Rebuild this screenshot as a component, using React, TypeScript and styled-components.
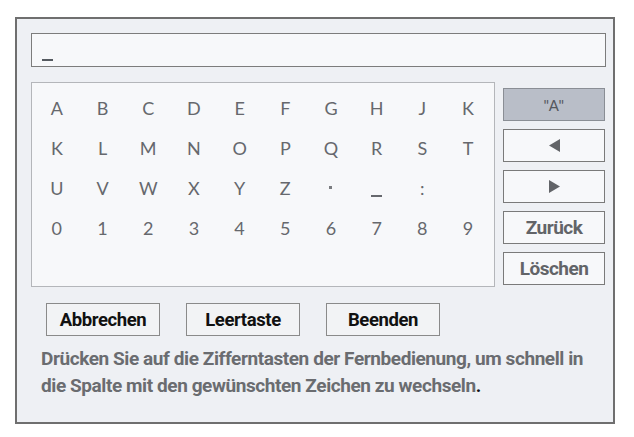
import React from "react";
import styled, { createGlobalStyle } from "styled-components";

const Global = createGlobalStyle`
  html, body { margin: 0; padding: 0; background: #ffffff; }
  body { font-family: "Liberation Sans", Arial, sans-serif; }
`;

const Page = styled.div`
  padding: 17px 0 0 15px;
`;

const Frame = styled.div`
  box-sizing: border-box;
  width: 600px;
  height: 407px;
  border: 2px solid #6f6f6f;
  background: #eef0f4;
  padding: 14px 0 0 14px;
  display: flex;
  flex-direction: column;
`;

const InputBox = styled.div`
  box-sizing: border-box;
  width: 575px;
  height: 34px;
  border: 1px solid #7c7c7c;
  background: #f7f8fa;
  padding: 0 0 0 10px;
  display: flex;
  align-items: flex-end;
`;

const Cursor = styled.div`
  width: 11px;
  height: 2px;
  background: #555a60;
  margin-bottom: 5px;
`;

const Middle = styled.div`
  display: flex;
  gap: 8px;
  margin-top: 15px;
`;

const Panel = styled.div`
  box-sizing: border-box;
  width: 464px;
  height: 205px;
  border: 1px solid #b4b6ba;
  background: #f7f8fa;
  padding: 5px 0 0 2px;
  display: grid;
  grid-template-columns: repeat(10, 45.7px);
  grid-auto-rows: 40px;
  align-content: start;
`;

const Key = styled.div`
  display: flex;
  align-items: center;
  justify-content: center;
  font-family: Lato, "Noto Sans", sans-serif;
  font-size: 18px;
  color: #66686d;
`;

const Underscore = styled.div`
  width: 11px;
  height: 2px;
  background: #66686d;
  margin-top: 16px;
`;

const SmallDot = styled.div`
  width: 3px;
  height: 3px;
  background: #7a7c80;
  margin-top: -2px;
`;

const SideColumn = styled.div`
  display: flex;
  flex-direction: column;
  gap: 8px;
  padding-top: 6px;
`;

const SideButton = styled.div<{ $active?: boolean }>`
  box-sizing: border-box;
  width: 102px;
  height: 33px;
  border: 1px solid ${(p) => (p.$active ? "#8a8e95" : "#7a7a7a")};
  background: ${(p) => (p.$active ? "#b9bec8" : "#f7f8fa")};
  display: flex;
  align-items: center;
  justify-content: center;
  font-family: Roboto, "Liberation Sans", sans-serif;
  font-weight: 700;
  font-size: 19px;
  letter-spacing: -0.5px;
  color: #626468;
`;

const ModeLabel = styled.span`
  font-family: Lato, "Noto Sans", sans-serif;
  font-weight: 400;
  font-size: 15px;
  letter-spacing: 0.5px;
  color: #55585e;
`;

const ActionRow = styled.div`
  display: flex;
  gap: 26px;
  margin: 16px 0 0 15px;
`;

const ActionButton = styled.div`
  box-sizing: border-box;
  width: 114px;
  height: 33px;
  border: 1px solid #8a8a8a;
  background: #f2f3f5;
  display: flex;
  align-items: center;
  justify-content: center;
  font-family: Roboto, "Liberation Sans", sans-serif;
  font-weight: 700;
  font-size: 18.5px;
  letter-spacing: -0.4px;
  color: #111111;
`;

const Help = styled.p`
  margin: 9px 0 0 10px;
  font-family: Roboto, "Liberation Sans", sans-serif;
  font-weight: 700;
  font-size: 19px;
  letter-spacing: -0.42px;
  line-height: 27px;
  color: #6a6c70;
  white-space: nowrap;
`;

const Dot = styled.span`
  color: #111111;
`;

const Arrow = ({ dir }: { dir: "left" | "right" }) => (
  <svg width="11" height="13" viewBox="0 0 11 13">
    {dir === "left" ? (
      <polygon points="11,0 11,13 0,6.5" fill="#626468" />
    ) : (
      <polygon points="0,0 0,13 11,6.5" fill="#626468" />
    )}
  </svg>
);

const rows: string[][] = [
  ["A", "B", "C", "D", "E", "F", "G", "H", "J", "K"],
  ["K", "L", "M", "N", "O", "P", "Q", "R", "S", "T"],
  ["U", "V", "W", "X", "Y", "Z", "·", "_", ":", ""],
  ["0", "1", "2", "3", "4", "5", "6", "7", "8", "9"],
];

export default function App() {
  return (
    <>
      <Global />
      <Page>
        <Frame>
          <InputBox>
            <Cursor />
          </InputBox>
          <Middle>
            <Panel>
              {rows.flat().map((c, i) => (
                <Key key={i}>
                  {c === "_" ? <Underscore /> : c === "·" ? <SmallDot /> : c}
                </Key>
              ))}
            </Panel>
            <SideColumn>
              <SideButton $active>
                <ModeLabel>"A"</ModeLabel>
              </SideButton>
              <SideButton>
                <Arrow dir="left" />
              </SideButton>
              <SideButton>
                <Arrow dir="right" />
              </SideButton>
              <SideButton>Zurück</SideButton>
              <SideButton>Löschen</SideButton>
            </SideColumn>
          </Middle>
          <ActionRow>
            <ActionButton>Abbrechen</ActionButton>
            <ActionButton>Leertaste</ActionButton>
            <ActionButton>Beenden</ActionButton>
          </ActionRow>
          <Help>
            Drücken Sie auf die Zifferntasten der Fernbedienung, um schnell in
            <br />
            die Spalte mit den gewünschten Zeichen zu wechseln<Dot>.</Dot>
          </Help>
        </Frame>
      </Page>
    </>
  );
}
